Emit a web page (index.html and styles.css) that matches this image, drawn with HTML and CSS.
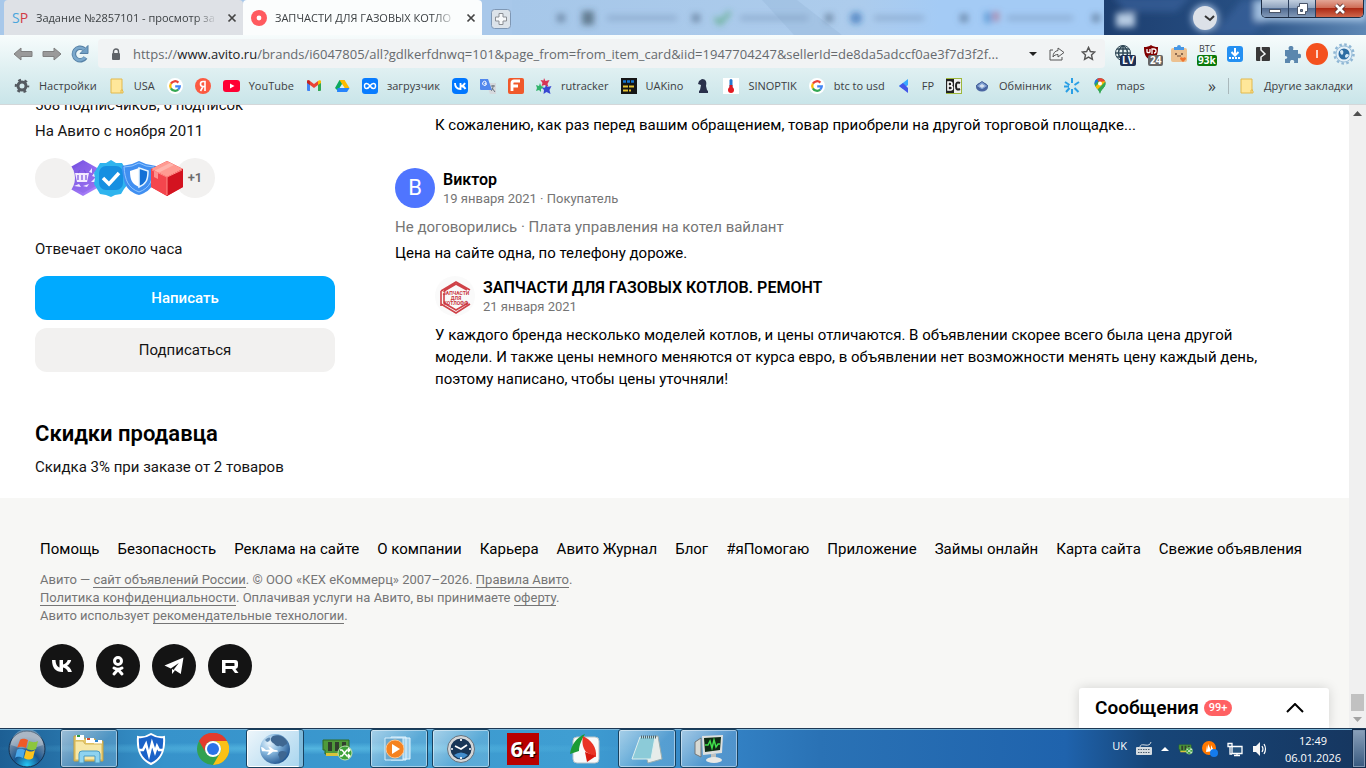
FILE: index.html
```html
<!DOCTYPE html>
<html lang="ru">
<head>
    <meta charset="UTF-8">
    <meta name="viewport" content="width=device-width, initial-scale=1.0">
    <title>ЗАПЧАСТИ ДЛЯ ГАЗОВЫХ КОТЛОВ</title>
    <link rel="stylesheet" href="styles.css">
</head>
<body>

<!-- shared icons -->
<svg class="defs" aria-hidden="true">
    <symbol id="google" viewBox="0 0 16 16"><circle cx="8" cy="8" r="8" fill="#fff"/><g fill="none" stroke-width="2.3"><path d="M11.4 4.6A4.8 4.8 0 0 0 3.9 5.6" stroke="#ea4335"/><path d="M3.9 5.6a4.8 4.8 0 0 0 0 4.8" stroke="#fbbc05"/><path d="M3.9 10.4a4.8 4.8 0 0 0 7.3 1.2" stroke="#34a853"/><path d="M11.2 11.6A4.8 4.8 0 0 0 12.8 8.3H8.2" stroke="#4285f4"/></g></symbol>
    <symbol id="folder" viewBox="0 0 16 16"><path d="M2 1h11v11l1 1v2H2z" fill="#ffe79a" stroke="#e2b94c"/><path d="M12 15v-3h2" fill="none" stroke="#e2b94c"/></symbol>
    <symbol id="close" viewBox="0 0 10 10"><path d="M1.5 1.5l7 7M8.5 1.5l-7 7" stroke="#444" stroke-width="1.7"/></symbol>
    <symbol id="ram" viewBox="0 0 32 24"><path d="M2 3h26v14H4v-4H2z" fill="#4f9a3a" stroke="#2e6a25"/><path d="M7 5h4v9H7zM14 5h4v9h-4zM21 5h4v9h-4z" fill="#31402e"/><path d="M5 16h17v3H5z" fill="#d9c33a"/><circle cx="24" cy="16" r="7" fill="#3fa23a" stroke="#bfe3b4"/><path d="M19 13h2l5 6h3M19 19h2l5-6h3M27 11l2 2-2 2M27 17l2 2-2 2" fill="none" stroke="#fff" stroke-width="1.4"/></symbol>
</svg>

<div class="window">
    <header class="tabs">
        <div class="tab">
            <span class="sp"><i>S</i><b>P</b></span>
            <span class="tab-title">Задание №2857101 - просмотр за</span>
            <button class="tab-close" aria-label="Закрыть"><svg width="10" height="10"><use href="#close"/></svg></button>
        </div>
        <div class="tab active">
            <svg width="16" height="16" viewBox="0 0 16 16"><circle cx="8" cy="8" r="8" fill="#ff5a5f"/><circle cx="8" cy="8" r="2.4" fill="#fff"/></svg>
            <span class="tab-title">ЗАПЧАСТИ ДЛЯ ГАЗОВЫХ КОТЛО</span>
            <button class="tab-close" aria-label="Закрыть"><svg width="10" height="10"><use href="#close"/></svg></button>
        </div>
        <button class="new-tab" aria-label="Новая вкладка"><svg width="20" height="20" viewBox="0 0 20 20"><rect x=".5" y=".5" width="19" height="19" rx="3" fill="#dce3ea" stroke="#7e97b4"/><path d="M8 4.500h4V8h3.500v4H12v3.500H8V12H4.500V8H8z" fill="#f6f8fa" stroke="#8b8f95"/></svg></button>
        <!-- windows seen through the glass -->
        <svg class="glass" viewBox="0 0 854 35" preserveAspectRatio="none" aria-hidden="true">
            <defs>
                <filter id="soft" x="-20%" y="-20%" width="140%" height="140%"><feGaussianBlur stdDeviation="3"/></filter>
                <linearGradient id="sky" x2="1" y2="0"><stop offset="0" stop-color="#a6c7e9"/><stop offset=".4" stop-color="#adccec"/><stop offset=".5" stop-color="#a4cbf5"/></linearGradient>
                <linearGradient id="deep" x2="1" y2="0"><stop offset="0" stop-color="#1d3f70"/><stop offset=".55" stop-color="#274f83"/><stop offset="1" stop-color="#5f88b5"/></linearGradient>
            </defs>
            <rect width="854" height="35" fill="url(#sky)"/>
            <path d="M250 0h35l45 35h-48z" fill="#96b6da" opacity=".4"/>
            <rect x="592" width="262" height="35" fill="url(#deep)"/>
            <g filter="url(#soft)">
                <path d="M600-4h80l-16 16h-50zM700 35l30-35h50l-40 35z" fill="#3a66a0" opacity=".6"/>
                <g opacity=".6">
                    <path d="M95 18h70M228 18h68M362 18h50M495 18h66" stroke="#7f9cc0" stroke-width="5"/>
                    <path d="M45 14h8v8h-8zM180 14h8v8h-8zM313 14h8v8h-8zM448 14h8v8h-8zM580 14h8v8h-8z" fill="#4c6480"/>
                    <rect x="70" y="11" width="12" height="14" fill="#334a58"/>
                    <path d="M203 18l5 5 10-11" stroke="#3ca05d" stroke-width="4" fill="none"/>
                    <circle cx="344" cy="18" r="6" fill="#215fae"/>
                    <rect x="472" y="12" width="8" height="11" fill="#4288c9"/><rect x="481" y="12" width="6" height="9" fill="#b45c74"/>
                </g>
                <rect x="604" y="13" width="19" height="14" fill="#b5cae2"/>
                <circle cx="693" cy="18" r="14" fill="#8fabcf"/>
                <rect x="742" y="0" width="112" height="21" fill="#b9d5f0" opacity=".8"/>
            </g>
        </svg>
        <button class="tab-search" aria-label="Поиск вкладок"><svg width="24" height="24" viewBox="0 0 24 24"><circle cx="12" cy="12" r="12" fill="#dce1e8"/><path d="M12 10l5 4 4-4" fill="none" stroke="#333" stroke-width="2"/></svg></button>
        <div class="caption-buttons">
            <button class="cap" aria-label="Свернуть"><svg width="14" height="12" viewBox="0 0 14 12"><rect x="1.500" y="6.500" width="11" height="3" fill="#fff" stroke="#4a5569"/></svg></button>
            <button class="cap" aria-label="Восстановить"><svg width="14" height="12" viewBox="0 0 14 12"><path d="M4.500.500h8v8h-2v3h-8v-8h2z" fill="#fff" stroke="#4a5569"/><path d="M5.500 6.500h2v2h-2z" fill="#6d87a8" stroke="#4a5569"/></svg></button>
            <button class="cap cap-close" aria-label="Закрыть окно"><svg width="14" height="12" viewBox="0 0 14 12"><path d="M3 2l8 8M11 2l-8 8" stroke="#5b3030" stroke-width="4.500"/><path d="M3 2l8 8M11 2l-8 8" stroke="#fff" stroke-width="2.600"/></svg></button>
        </div>
    </header>

    <div class="chrome">
        <div class="toolbar">
            <button class="tool" aria-label="Назад"><svg width="20" height="14" viewBox="0 0 20 14"><path d="M1 7l7-6v3.500h11v5H8V13z" fill="#9a9a9a" stroke="#808080"/></svg></button>
            <button class="tool" aria-label="Вперёд"><svg width="20" height="14" viewBox="0 0 20 14"><path d="M19 7l-7-6v3.500H1v5h11V13z" fill="#9a9a9a" stroke="#808080"/></svg></button>
            <button class="tool" aria-label="Обновить"><svg width="18" height="18" viewBox="0 0 18 18"><path d="M14.500 12.500A6.300 6.300 0 1 1 13 4" fill="none" stroke="#5580a5" stroke-width="4.500"/><path d="M17 .500v8H9z" fill="#6f9fc5" stroke="#5580a5"/><path d="M14 12.500A6.200 6.200 0 1 1 13 4.300" fill="none" stroke="#7aa8cc" stroke-width="2.600"/></svg></button>
            <div class="address">
                <svg width="10" height="12" viewBox="0 0 10 12"><rect x="1" y="5" width="8" height="7" rx="1" fill="#5f6368"/><path d="M2.500 5V3.500a2.500 2.500 0 0 1 5 0V5" fill="none" stroke="#5f6368" stroke-width="1.400"/></svg>
                <span class="url">https://<b>www.avito.ru</b>/brands/i6047805/all?gdlkerfdnwq=101&amp;page_from=from_item_card&amp;iid=1947704247&amp;sellerId=de8da5adccf0ae3f7d3f2f...</span>
                <svg width="8" height="4" viewBox="0 0 8 4"><path d="M0 0h8L4 4z" fill="#222"/></svg>
                <svg width="16" height="14" viewBox="0 0 16 14"><path d="M4 3H1v10h12v-3" fill="none" stroke="#555"/><path d="M9 1l6 4.500L9 10V7.500C6.500 7.500 5 8.500 4 10c0-4 2-6 5-6.500z" fill="none" stroke="#555" stroke-linejoin="round"/></svg>
                <svg class="star" width="15" height="15" viewBox="0 0 16 16"><path d="M8 1.500l2 4.400 4.700.5-3.500 3.200 1 4.700L8 11.900l-4.200 2.400 1-4.700L1.300 6.400 6 5.900z" fill="none" stroke="#555" stroke-width="1.500"/></svg>
            </div>
            <div class="extensions">
                <div class="ext">
                    <svg width="16" height="16" viewBox="0 0 16 16"><circle cx="8" cy="8" r="7.500" fill="#eaf5f4" stroke="#304958"/><path d="M.500 8h15M8 .500v15M2 4h12M2 12h12M8 .500C2 5 2 11 8 15.500M8 .500c6 4.500 6 10.500 0 15" fill="none" stroke="#304958" stroke-width="1.500"/></svg>
                    <span class="badge navy">LV</span>
                </div>
                <div class="ext">
                    <svg width="16" height="16" viewBox="0 0 16 16"><path d="M8 0c2 1.500 4 2 7 2 0 7-1 10-7 14C2 12 1 9 1 2c3 0 5-.5 7-2z" fill="#800000"/><path d="M4 4v3a2 2 0 0 0 3 0V4M9 9V4h2a2 2 0 0 1 0 4" fill="none" stroke="#fff" stroke-width="1.300"/></svg>
                    <span class="badge grey">24</span>
                </div>
                <svg width="16" height="18" viewBox="0 0 16 18"><rect y="3" width="16" height="14" rx="2" fill="#ecc191"/><path d="M3 2h3a2 2 0 0 1 4 0h3v3H3z" fill="#4697e4"/><circle cx="5" cy="9" r="1" fill="#6b4a38"/><circle cx="11" cy="9" r="1" fill="#6b4a38"/><path d="M6 11h4" stroke="#6b4a38"/><path d="M12 17l-3-3c0-2 2-2 3-1 1-1 3-1 3 1z" fill="#ef7631"/></svg>
                <div class="ext btc">BTC<span class="badge green">93k</span></div>
                <svg width="16" height="16" viewBox="0 0 16 16"><rect width="16" height="16" rx="3" fill="#2490f2"/><path d="M8 2v6M4.500 6L8 9.500 11.500 6" fill="none" stroke="#fff" stroke-width="2"/><path d="M2 12h12" stroke="#fff" stroke-width="2" stroke-dasharray="2 1"/></svg>
                <svg width="16" height="16" viewBox="0 0 16 16"><rect x="1" y="1" width="14" height="14" rx="1" fill="#383838"/><path d="M6 0v4l4 4-4 3v5" fill="none" stroke="#f4f7f7" stroke-width="1.500"/></svg>
                <div class="profile">
                    <svg width="18" height="18" viewBox="0 0 18 18"><path d="M2 5h4c-1-3 0-4 2-4s3 1 2 4h5v4c3-1 3 1 3 2s0 3-3 2v5h-4c1-3-1-3-2-3s-2 0-2 3H2v-4c3 0 3-3 0-3z" fill="#5b87ae"/></svg>
                    <svg width="22" height="22" viewBox="0 0 22 22"><circle cx="11" cy="11" r="11" fill="#f4511e"/><path d="M11 7v8" stroke="#fff" stroke-width="1.500"/></svg>
                    <svg width="22" height="22" viewBox="0 0 22 22"><circle cx="11" cy="11" r="9.500" fill="#dcecf6" stroke="#8eb6d4" stroke-width="2.500" stroke-dasharray="2.500 2.470"/><circle cx="11" cy="11" r="8" fill="#e5f1f8" stroke="#9abfd9"/><circle cx="11" cy="11" r="5.500" fill="#2d6da3"/><path d="M7 8c3-3 4 1 3 3s-3 0-3-3M12 13c1-3 3-2 4-1-1 3-4 4-4 1" fill="#d6e9f5"/></svg>
                </div>
            </div>
        </div>

        <nav class="bookmarks">
            <a href="#"><svg width="16" height="16" viewBox="0 0 16 16"><circle cx="8" cy="8" r="4" fill="none" stroke="#555b61" stroke-width="3"/><circle cx="8" cy="8" r="6" fill="none" stroke="#555b61" stroke-width="2.500" stroke-dasharray="2.700 3.580" stroke-dashoffset="1.300"/></svg>Настройки</a>
            <a href="#"><svg width="16" height="16"><use href="#folder"/></svg>USA</a>
            <a href="#" aria-label="Google"><svg width="16" height="16"><use href="#google"/></svg></a>
            <a href="#" aria-label="Яндекс"><svg width="16" height="16" viewBox="0 0 16 16"><circle cx="8" cy="8" r="8" fill="#fc5a41"/><path d="M10 13V3.500H8a2.400 2.400 0 0 0 0 5h2M8 8.500L5.500 13" fill="none" stroke="#fff" stroke-width="1.600"/></svg></a>
            <a href="#"><svg width="17" height="16" viewBox="0 0 17 16"><rect y="2" width="17" height="12" rx="3" fill="#ff0033"/><path d="M7 5.500v5l4.500-2.500z" fill="#fff"/></svg>YouTube</a>
            <a href="#" aria-label="Gmail"><svg width="16" height="16" viewBox="0 0 16 16"><path d="M1 3.500h3V13H2a1 1 0 0 1-1-1z" fill="#4285f4"/><path d="M12 3.500h3V12a1 1 0 0 1-1 1h-2z" fill="#34a853"/><path d="M1 3.500C1 2 3 2 4 3l4 3 4-3v4L8 10 4 7z" fill="#ea4335"/><path d="M1 3.500c0-1.500 2-1.500 3-.5v4L1 5z" fill="#c5221f"/><path d="M12 3c1-1 3-1 3 .5V5l-3 2z" fill="#fbbc04"/></svg></a>
            <a href="#" aria-label="Диск"><svg width="16" height="16" viewBox="0 0 16 16"><path d="M5.500 2h5L5 14 1 10z" fill="#0da960"/><path d="M5.500 2h5l5 8h-5z" fill="#ffba00"/><path d="M3.500 10h12L13 14H3z" fill="#2684fc"/><path d="M8 6l2.500 4h-5z" fill="#e3f1f3"/></svg></a>
            <a href="#"><svg width="16" height="16" viewBox="0 0 16 16"><rect width="16" height="16" rx="3" fill="#087cff"/><path d="M8 8C6 5 2.500 4.500 2.500 8S6 11 8 8s5.500-3.500 5.500 0S10 11 8 8z" fill="none" stroke="#fff" stroke-width="1.500"/></svg>загрузчик</a>
            <a href="#" aria-label="ВКонтакте"><svg width="16" height="16" viewBox="0 0 16 16"><rect width="16" height="16" rx="4" fill="#07f"/><path d="M3 5c0 4 2 6 5.500 6V5M13 5c-1 2-2 3-4 3 2 0 3.500 1 4.500 3" fill="none" stroke="#fff" stroke-width="1.800"/></svg></a>
            <a href="#" aria-label="Переводчик"><svg width="16" height="16" viewBox="0 0 16 16"><path d="M6 5h10v11h-6z" fill="#d5d9dd"/><path d="M0 1h8l4 11H1a1 1 0 0 1-1-1z" fill="#5187ed"/><path d="M7 5H5v1h1.500a2 2 0 1 1-.5-2" fill="none" stroke="#fff"/><path d="M11 8h4M13 7v1c0 3-1 4-2 5M12 10l3 4" fill="none" stroke="#69737d"/></svg></a>
            <a href="#" aria-label="F"><svg width="16" height="16" viewBox="0 0 16 16"><rect width="16" height="16" rx="2" fill="#f0592b"/><path d="M4 13V5q0-2 2-2h6M4 8h6" fill="none" stroke="#fff" stroke-width="2.800"/></svg></a>
            <a href="#"><svg width="16" height="16" viewBox="0 0 16 16"><path d="M8 0l1.500 3 4-1-2 4 1 3-4-2-3 1 1-3-2-3 3 .5z" fill="#d93454"/><path d="M4 5l1 3 3 1-3 2v3l-2-2-3 1 1-3-1-3 3 1z" fill="#31b46b"/><path d="M10 7l1.500 2 4-1-2 4 1 4-4-2-3 2 .5-4-2-2 3-.5z" fill="#3848d2"/></svg>rutracker</a>
            <a href="#"><svg width="16" height="16" viewBox="0 0 16 16"><rect width="16" height="16" fill="#151515"/><path d="M2 3.500h12" stroke="#1675d1" stroke-width="2.500" stroke-dasharray="3 1"/><path d="M2 8.500h12M2 12.500h8" stroke="#e4c233" stroke-width="2" stroke-dasharray="5 1"/></svg>UAKino</a>
            <a href="#" aria-label="Шахматы"><svg width="16" height="16" viewBox="0 0 16 16"><path d="M7 1c4 0 5 3 4 7l1 4 1 1v2H4v-2l1-1 1-5-3-1 1-3z" fill="#29304a"/></svg></a>
            <a href="#"><svg width="16" height="16" viewBox="0 0 16 16"><rect width="16" height="16" fill="#fff"/><rect x="6.500" y="1" width="3" height="11" rx="1.500" fill="#2678ce"/><path d="M8 7v5" stroke="#d81720" stroke-width="3"/><circle cx="8" cy="12" r="3" fill="#e31b23"/></svg>SINOPTIK</a>
            <a href="#"><svg width="16" height="16"><use href="#google"/></svg>btc to usd</a>
            <a href="#"><svg width="16" height="16" viewBox="0 0 16 16"><path d="M11 1v6L6 11 2 8z" fill="#38a9ff"/><path d="M2 8l4-3 5 5v5z" fill="#4256e8"/></svg>FP</a>
            <a href="#" aria-label="BC"><svg width="16" height="16" viewBox="0 0 16 16"><rect width="16" height="16" fill="#9db83b"/><rect y="1" width="8" height="14" fill="#222"/><rect x="8" y="1" width="7" height="14" fill="#eee"/><path d="M2 4v8h2.500a2 2 0 0 0 0-4H2h2a2 2 0 0 0 0-4z" fill="none" stroke="#fff" stroke-width="1.600"/><path d="M14 5q-4-2-4 3t4 3" fill="none" stroke="#222" stroke-width="2"/></svg></a>
            <a href="#"><svg width="16" height="16" viewBox="0 0 16 16"><ellipse cx="8" cy="9" rx="6" ry="4.500" fill="#4a66a3"/><path d="M2 8l6-4.500L14 8l-6 4z" fill="#7e9ed1" stroke="#445f98"/><path d="M5 8l3-2 3 2-3 2z" fill="#d5e1f0"/></svg>Обмінник</a>
            <a href="#" aria-label="Заметки"><svg width="16" height="16" viewBox="0 0 16 16"><path d="M8 5V0M10.500 7L15 4M10.500 10l4 4M8 11v5M5.500 10L2 14M5.500 7L1 4M5 8.500H0" stroke="#2a9fe5" stroke-width="2"/></svg></a>
            <a href="#"><svg width="16" height="16" viewBox="0 0 16 16"><defs><clipPath id="pin"><path d="M8 0a5.500 5.500 0 0 1 5.500 5.500C13.500 9.500 9 11 8 16 7 11 2.500 9.500 2.500 5.500A5.500 5.500 0 0 1 8 0z"/></clipPath></defs><g clip-path="url(#pin)"><rect width="16" height="16" fill="#34a853"/><path d="M0 9L9 0H0z" fill="#1a73e8"/><path d="M4 0h12v5H8z" fill="#ea4335"/><path d="M2 10l6-6 6-1-7 9z" fill="#fbbc04"/><path d="M9 8l5-5v5l-6 8-3-4z" fill="#34a853"/></g><circle cx="8" cy="5.500" r="2" fill="#fff"/></svg>maps</a>
            <span class="overflow">»</span>
            <a href="#" class="other"><svg width="16" height="16"><use href="#folder"/></svg>Другие закладки</a>
        </nav>
    </div>

    <div class="viewport">
        <div class="page">
            <main class="content">
                <aside class="seller">
                    <p>508 подписчиков, 6 подписок</p>
                    <p>На Авито с ноября 2011</p>
                    <div class="medals">
                        <span class="medal plain first"></span>
                        <svg class="medal" viewBox="0 0 40 40"><defs><linearGradient id="violet" x2="1" y2="1"><stop stop-color="#6b46dc"/><stop offset="1" stop-color="#b58cff"/></linearGradient></defs><path d="M20 2l16 9v18l-16 9-16-9V11z" fill="url(#violet)"/><path d="M20 5l13 8v15l-13 7-13-7V13z" fill="#8660e6" opacity=".5"/><path d="M12 15h14l-2 9H14z" fill="#f2eaff"/><path d="M15 15l2-3M23 15l-2-3M15 17v5M19 17v5M23 17v5" stroke="#7952dc" stroke-width="1.200"/><path d="M11 28l5-2 2 3zM20 28l6-2-2 3zM28 24l4-4v4zM29 18l3-4v5zM26 14l3-4v5z" fill="#f2eaff"/></svg>
                        <svg class="medal" viewBox="0 0 40 40"><path d="M20 2l5 3 6 0 3 5 3 5-1 5 1 6-4 5-3 5-6 1-4 2-5-2-6-1-3-5-3-5 1-6-1-5 3-5 3-5 6 0z" fill="#2fb4ee"/><rect x="8" y="8" width="24" height="24" rx="7" fill="#168fe1"/><path d="M12 20l6 6 10-11" fill="none" stroke="#fff" stroke-width="3.500"/></svg>
                        <svg class="medal" viewBox="0 0 40 40"><path d="M20 3l7 3 10 2c0 15-3 25-17 29C6 33 4 23 3 8l10-2z" fill="#408ff1"/><path d="M20 5l7 3 8 1c-1 13-4 21-15 25C9 30 6 22 5 9l8-1z" fill="none" stroke="#90c5ff"/><path d="M11 13l9-3v19c-7-3-9-7-9-16z" fill="#fff"/><path d="M20 10l9 3c0 9-2 13-9 16z" fill="#1370d6" stroke="#e7f5ff" stroke-width="1.500"/></svg>
                        <svg class="medal" viewBox="0 0 40 40"><path d="M20 3l16 8v18l-16 9-16-9V11z" fill="#ed2932"/><path d="M4 11l16-8 16 8-16 8z" fill="#ff9a91"/><path d="M20 19l16-8v18l-16 9z" fill="#d31320"/><path d="M4 11l16 8v19L4 29z" fill="#f4464d"/><path d="M27 7L11 15v6l-4-2v-6l16-8z" fill="#ffc7be" opacity=".6"/><path d="M5 12l15 7 15-7M20 19v18" fill="none" stroke="#ff8983"/></svg>
                        <span class="medal plain more">+1</span>
                    </div>
                    <p class="answers">Отвечает около часа</p>
                    <button class="btn btn-primary">Написать</button>
                    <button class="btn">Подписаться</button>
                    <h2>Скидки продавца</h2>
                    <p class="discount">Скидка 3% при заказе от 2 товаров</p>
                </aside>

                <section class="reviews">
                    <p class="reply-text">К сожалению, как раз перед вашим обращением, товар приобрели на другой торговой площадке...</p>
                    <article class="review">
                        <div class="author">
                            <span class="avatar">В</span>
                            <div>
                                <h3>Виктор</h3>
                                <small>19 января 2021 · Покупатель</small>
                            </div>
                        </div>
                        <p class="deal">Не договорились · Плата управления на котел вайлант</p>
                        <p>Цена на сайте одна, по телефону дороже.</p>
                        <div class="reply">
                            <div class="author">
                                <svg class="shop-logo" width="40" height="40" viewBox="0 0 40 40"><circle cx="20" cy="20" r="20" fill="#fafafa"/><path d="M6 15l15-9 14 8M9 15l12-7 11 6M6 15v13l15 9 14-9M9 17v10l12 7 12-7M6 25v5" fill="none" stroke="#cf4248" stroke-width="1.600"/><text x="21" y="19" text-anchor="middle" class="logo-text">ЗАПЧАСТИ</text><text x="21" y="24" text-anchor="middle" class="logo-text">ДЛЯ</text><text x="21" y="29" text-anchor="middle" class="logo-text">КОТЛОФФ</text></svg>
                                <div>
                                    <h3>ЗАПЧАСТИ ДЛЯ ГАЗОВЫХ КОТЛОВ. РЕМОНТ</h3>
                                    <small>21 января 2021</small>
                                </div>
                            </div>
                            <p>У каждого бренда несколько моделей котлов, и цены отличаются. В объявлении скорее всего была цена другой модели. И также цены немного меняются от курса евро, в объявлении нет возможности менять цену каждый день, поэтому написано, чтобы цены уточняли!</p>
                        </div>
                    </article>
                </section>
            </main>

            <footer class="footer">
                <nav class="footer-links">
                    <a href="#">Помощь</a>
                    <a href="#">Безопасность</a>
                    <a href="#">Реклама на сайте</a>
                    <a href="#">О компании</a>
                    <a href="#">Карьера</a>
                    <a href="#">Авито Журнал</a>
                    <a href="#">Блог</a>
                    <a href="#">#яПомогаю</a>
                    <a href="#">Приложение</a>
                    <a href="#">Займы онлайн</a>
                    <a href="#">Карта сайта</a>
                    <a href="#">Свежие объявления</a>
                </nav>
                <p class="legal">
                    Авито — <a href="#">сайт объявлений России</a>. © ООО «КЕХ еКоммерц» 2007–2026. <a href="#">Правила Авито</a>.<br>
                    <a href="#">Политика конфиденциальности</a>. Оплачивая услуги на Авито, вы принимаете <a href="#">оферту</a>.<br>
                    Авито использует <a href="#">рекомендательные технологии</a>.
                </p>
                <div class="socials">
                    <a href="#" aria-label="ВКонтакте"><svg width="44" height="44" viewBox="0 0 44 44"><path d="M12 16h3.500c.2 5 2.400 7 4 7.500V16H23v4.500c2-.3 4-2.200 4.700-4.500h3.500c-.6 2.700-2.600 4.900-4.200 5.800 1.600.8 3.900 2.600 4.900 6.200H28c-.8-2.400-2.700-4.200-5-4.500V28h-.6C15.500 28 12.100 23.800 12 16z" fill="#fff"/></svg></a>
                    <a href="#" aria-label="Одноклассники"><svg width="44" height="44" viewBox="0 0 44 44"><circle cx="22" cy="17" r="3.500" fill="none" stroke="#fff" stroke-width="3"/><path d="M18 24c3 1.800 5 1.800 8 0M22 25.500l-4 4.500M22 25.500l4 4.500" fill="none" stroke="#fff" stroke-width="3" stroke-linecap="round"/></svg></a>
                    <a href="#" aria-label="Telegram"><svg width="44" height="44" viewBox="0 0 44 44"><path d="M12.500 21.500L31.500 13.500l-2.700 16.500-7-4.500 5-6.500-8 5.500z" fill="#fff"/><path d="M20 25v5l3-3.500z" fill="#fff"/></svg></a>
                    <a href="#" aria-label="Rutube"><svg width="44" height="44" viewBox="0 0 44 44"><path d="M14 16h13q3 0 3 3v3q0 2.500-2.500 3l3 4H27l-3-4h-6.500v4H14zM17.500 19v3H26q.5 0 .5-.5v-2q0-.5-.5-.5z" fill="#fff" fill-rule="evenodd"/></svg></a>
                </div>
            </footer>
            <button class="messenger">
                <span>Сообщения</span><span class="count">99+</span>
                <svg width="18" height="10" viewBox="0 0 18 10"><path d="M1 9l8-8 8 8" fill="none" stroke="#000" stroke-width="2"/></svg>
            </button>
        </div>
        <div class="scrollbar" aria-hidden="true">
            <svg width="9" height="5" viewBox="0 0 9 5"><path d="M0 5h9L4.500 0z" fill="#505050"/></svg>
            <span class="thumb"></span>
            <svg width="9" height="5" viewBox="0 0 9 5"><path d="M0 0h9L4.500 5z" fill="#a3a3a3"/></svg>
        </div>
    </div>

    <footer class="taskbar">
        <button class="start" aria-label="Пуск"><svg width="38" height="38" viewBox="0 0 38 38"><defs><radialGradient id="orb" cx=".5" cy=".95" r=".8"><stop stop-color="#24c8f5"/><stop offset=".45" stop-color="#17548f"/><stop offset="1" stop-color="#8799ac"/></radialGradient></defs><circle cx="19" cy="19" r="18" fill="url(#orb)" stroke="#15314f"/><path d="M3 15a16 16 0 0 1 32 0q-16 7-32 0" fill="#fff" opacity=".3"/><path d="M12 10c3-2 5-1 8 0l-2 8c-3-1-5-2-9 0z" fill="#ef5a27"/><path d="M21 11c3 1 5 2 9 0l-2 8c-4 2-6 1-9 0z" fill="#8cc63e"/><path d="M9 20c3-2 5-1 8 0l-2 8c-3-1-5-2-8 0z" fill="#4aa8ea"/><path d="M18 20c4 2 6 2 9 0l-2 8c-3 2-5 2-9 0z" fill="#fcc21b"/></svg></button>
        <div class="apps">
            <button class="app open" aria-label="Проводник"><svg width="34" height="32" viewBox="0 0 34 32"><path d="M2 3h9l2 3h10l2 2h6v20H2z" fill="#e5c96c" stroke="#c29f40"/><path d="M4 2h8v5H4zM14 5h8v5h-8zM22 7h8v5h-8z" fill="#fff"/><path d="M5 3h3" stroke="#2c9b45" stroke-width="2"/><path d="M15 6h3" stroke="#d44a32" stroke-width="2"/><path d="M23 8h3" stroke="#2f86cf" stroke-width="2"/><path d="M3 8h8l2 3h17v16H3z" fill="#f7e8a8" stroke="#d6b657"/><path d="M7 30v-9q0-3 3-3h15q3 0 3 3v9h-5v-7H12v7z" fill="#8ed3f0" stroke="#4b9ac2"/></svg></button>
            <button class="app" aria-label="Защита"><svg width="30" height="32" viewBox="0 0 30 32"><path d="M15 1q6 4 13 3c1 13-2 22-13 27C4 26 1 17 2 4q7 1 13-3z" fill="#1a62c8" stroke="#fff" stroke-width="2"/><path d="M3 17h4l3-6 3 11 3-12 3 9 2-6 2 4h4" fill="none" stroke="#fff" stroke-width="2.500"/></svg></button>
            <button class="app" aria-label="Chrome"><svg width="32" height="32" viewBox="0 0 32 32"><circle cx="16" cy="16" r="16" fill="#31a151"/><path d="M2 8a16 16 0 0 1 28 0H16a8 8 0 0 0-7 12z" fill="#e33b2e"/><path d="M30 8a16 16 0 0 1-14 24l7-12a8 8 0 0 0-7-12z" fill="#fbc116"/><circle cx="16" cy="16" r="8" fill="#fff"/><circle cx="16" cy="16" r="6" fill="#2b73e8"/></svg></button>
            <button class="app current" aria-label="Браузер"><svg width="32" height="32" viewBox="0 0 32 32"><defs><radialGradient id="earth" cx=".3" cy=".3" r=".8"><stop stop-color="#e9f4fb"/><stop offset=".4" stop-color="#8dbde2"/><stop offset="1" stop-color="#1a4f8c"/></radialGradient></defs><circle cx="16" cy="16" r="15" fill="url(#earth)"/><path d="M14 3c6-2 12 1 14 6 1 3-2 2-3 4-2 2-3-1-5 0-3 1-4-2-6-3-3-2-3-5 0-7zM20 19c3-2 7-1 8 1-1 4-3 6-6 8-2-1-1-4-3-6z" fill="#3f6791"/><path d="M6 7c2-2 4-3 5-2s-1 4-3 4z" fill="#5d89b2"/><path d="M2 14l2 .5 3 2.500 4-.5-2-3 2 .3 4 3 3 .5q2 1 0 1.500l-4 0-4 3h-2l2-3-4-.5-3 0z" fill="#fff"/></svg></button>
            <button class="app" aria-label="Память"><svg width="32" height="24"><use href="#ram"/></svg></button>
            <button class="app open" aria-label="Проигрыватель"><svg width="30" height="28" viewBox="0 0 30 28"><path d="M7 2h15v23H7zM13 3h13v21H13z" fill="#9fd0ec" stroke="#e0f3fd"/><path d="M1 3h18v22H1z" fill="#6ba9cf" stroke="#d7effd"/><circle cx="11" cy="14" r="9" fill="#f58220" stroke="#fbc590"/><path d="M8 9v10l8-5z" fill="#fff"/></svg></button>
            <button class="app open" aria-label="Часы"><svg width="30" height="30" viewBox="0 0 30 30"><circle cx="15" cy="15" r="12" fill="#193657" stroke="#d3d6d8" stroke-width="3"/><circle cx="15" cy="15" r="13.500" fill="none" stroke="#65717c"/><path d="M8 21q7-5 14 0-7 7-14 0" fill="#438dcc"/><path d="M9 12l6 3 6-4M15 5v2M15 23v2M5 15h2M23 15h2" fill="none" stroke="#fff" stroke-width="1.700"/></svg></button>
            <button class="app" aria-label="AIDA64"><span class="aida">64</span></button>
            <button class="app" aria-label="FastStone"><svg width="32" height="32" viewBox="0 0 32 32"><rect x="4" y="4" width="26" height="26" rx="4" fill="#f9faf9" stroke="#b7c5ca"/><path d="M16 1C8 4 2 12 1 21l9-3C10 12 13 6 16 1z" fill="#1b9b36"/><path d="M14 3c-1 5-1 11 3 16l10 5C28 14 22 7 14 3z" fill="#e93425"/><path d="M16 19l11 4-9 6z" fill="#d8170d"/></svg></button>
            <button class="app open" aria-label="Блокнот"><svg width="32" height="30" viewBox="0 0 32 30"><path d="M10 4l17-2 4 23-14 4z" fill="#e7ecea" stroke="#9caeae"/><path d="M9 3h15l-4 22H1z" fill="#8ccbd8" stroke="#deefef"/><path d="M10 3h15" stroke="#50666d" stroke-width="3" stroke-dasharray="1 1"/></svg></button>
            <button class="app open" aria-label="Монитор"><svg width="32" height="30" viewBox="0 0 32 30"><path d="M2 8l6-4v19l-6-3z" fill="#d8d9d4" stroke="#72777a"/><path d="M9 2l21-1-1 18-19 2z" fill="#dde0df"/><path d="M11 4l17-1-1 13-15 2z" fill="#102b15"/><path d="M12 11h3l2-4 2 7 2-8 2 7 2-3h2" fill="none" stroke="#40df4b" stroke-width="1.500"/><path d="M18 20h5v4h-5z" fill="#bfc1bf"/><ellipse cx="21" cy="26" rx="8" ry="3" fill="#e8e8e5"/></svg></button>
        </div>
        <div class="tray">
            <span class="lang">UK</span>
            <svg width="16" height="14" viewBox="0 0 16 14"><rect y="5" width="16" height="8" rx="1" fill="#d5dce1"/><path d="M2 7.500h12M2 10.500h12" stroke="#4b5d6e" stroke-dasharray="1.500 1"/><path d="M4 5q0-3 5-2t6-3" fill="none" stroke="#d5dce1"/></svg>
            <svg width="8" height="4" viewBox="0 0 8 4"><path d="M0 4h8L4 0z" fill="#fff"/></svg>
            <svg width="15" height="12"><use href="#ram"/></svg>
            <svg width="16" height="16" viewBox="0 0 16 16"><circle cx="7" cy="7" r="7" fill="#ff7800"/><path d="M4 11l1-7 1 5V3l3 6V4l3 6z" fill="#fff"/><circle cx="12" cy="12" r="4" fill="#147bed"/></svg>
            <svg width="16" height="16" viewBox="0 0 16 16"><path d="M5 5.500h10v7H5zM7 14.500h6M10 12v3" fill="#27547f" stroke="#fff" stroke-width="1.300"/><path d="M1 2.500h4v3H1zM3 5v8h2" fill="none" stroke="#fff" stroke-width="1.300"/></svg>
            <svg width="16" height="16" viewBox="0 0 16 16"><path d="M1 5h3l4-4v14l-4-4H1z" fill="#f6f6f6"/><path d="M10 5q2 3 0 6M12 3q3 5 0 10" fill="none" stroke="#fff" stroke-width="1.200"/></svg>
            <div class="clock">12:49<br>06.01.2026</div>
            <button class="show-desktop" aria-label="Свернуть все окна"></button>
        </div>
    </footer>
</div>

</body>
</html>
```
FILE: styles.css
```css
* {
    box-sizing: border-box;
}
body {
    margin: 0;
    font-family: Roboto, "Liberation Sans", sans-serif;
    font-size: 15px;
    line-height: 22px;
    color: #000;
}
h2, h3, p {
    margin: 0;
}
a {
    color: inherit;
    text-decoration: none;
}
button {
    padding: 0;
    border: none;
    background: none;
    font: inherit;
    color: inherit;
    cursor: pointer;
}
svg {
    display: block;
    flex: none;
}
.defs {
    position: absolute;
    width: 0;
    height: 0;
}
.window {
    display: flex;
    flex-direction: column;
    height: 100vh;
    overflow: hidden;
}

/* browser tabs */
.tabs {
    position: relative;
    display: flex;
    align-items: center;
    flex: none;
    height: 35px;
    padding-left: 4px;
    background: #a8c8ea;
    font-family: "Open Sans", "Noto Sans", sans-serif;
    font-size: 11px;
}
.tab {
    display: flex;
    align-items: center;
    gap: 8px;
    width: 239px;
    height: 35px;
    padding: 0 4px 0 8px;
    border-radius: 4px 4px 0 0;
    background: #dee1e6;
    color: #3c4043;
}
.tab.active {
    background: #fbfdfd;
}
.tab-title {
    flex: 1;
    white-space: nowrap;
    -webkit-mask-image: linear-gradient(to right, #000 88%, transparent);
    mask-image: linear-gradient(to right, #000 88%, transparent);
}
.tab-close {
    padding: 2px;
}
.sp {
    width: 16px;
    font-size: 14px;
}
.sp i {
    font-style: normal;
    color: #4aa5dc;
}
.sp b {
    font-weight: 400;
    color: #d23c45;
}
.new-tab {
    margin: 2px 0 0 9px;
    z-index: 1;
}
.glass {
    position: absolute;
    left: 512px;
    top: 0;
    width: calc(100% - 512px);
    height: 35px;
}
.tab-search {
    position: absolute;
    top: 6px;
    right: 149px;
}
.caption-buttons {
    position: absolute;
    top: 0;
    right: 2px;
    display: flex;
    height: 18px;
    border: 1px solid #1c2c44;
    border-top: none;
    border-radius: 0 0 5px 5px;
    overflow: hidden;
}
.cap {
    display: flex;
    align-items: center;
    justify-content: center;
    width: 27px;
    border-right: 1px solid #2c3f5c;
    background: linear-gradient(#c2cfdf, #90a4bf 45%, #526c92 50%, #8299b8);
}
.cap-close {
    width: 47px;
    border-right: none;
    background: linear-gradient(#e3a595, #cf6d57 45%, #ad2a15 50%, #d0674c);
}

/* toolbar and bookmarks */
.chrome {
    flex: none;
    border-bottom: 1px solid #d3d7d9;
    background: linear-gradient(#f7fcfc, #e0f0f2 48%, #c9e5e9);
    font-family: "Open Sans", "Noto Sans", sans-serif;
    font-size: 11px;
    color: #3c4043;
}
.toolbar {
    display: flex;
    align-items: center;
    gap: 9px;
    height: 37px;
    padding: 0 11px 0 13px;
}
.address {
    display: flex;
    flex: 1;
    align-items: center;
    gap: 12px;
    min-width: 0;
    height: 29px;
    padding: 0 9px 0 13px;
    border-radius: 4px;
    background: #f1f3f4;
}
.url {
    flex: 1;
    min-width: 0;
    white-space: nowrap;
    font-size: 13px;
    color: #666a6e;
}
.url b {
    font-weight: 400;
    color: #202124;
}
.star {
    margin-left: 4px;
}
.extensions {
    display: flex;
    align-items: center;
    gap: 12px;
    margin-left: 1px;
}
.profile {
    display: flex;
    align-items: center;
    gap: 5px;
}
.ext {
    position: relative;
    width: 16px;
    height: 18px;
}
.btc {
    font-size: 9px;
    line-height: 8px;
}
.badge {
    position: absolute;
    top: 10px;
    left: 5px;
    padding: 0 2px;
    border-radius: 2px;
    font-size: 10px;
    font-weight: 700;
    line-height: 11px;
    color: #fff;
}
.navy {
    background: #1e3054;
}
.grey {
    background: #666;
}
.green {
    left: -2px;
    padding: 0 1px;
    background: #0a7a0a;
}
.bookmarks {
    display: flex;
    align-items: center;
    gap: 12px;
    height: 32px;
    padding: 0 13px 4px 14px;
    white-space: nowrap;
}
.bookmarks a {
    display: flex;
    align-items: center;
    gap: 9px;
}
.overflow {
    margin-left: auto;
    font-size: 16px;
}
.bookmarks .other {
    padding-left: 10px;
    border-left: 1px solid #a9b8bb;
    line-height: 16px;
}

/* page area */
.viewport {
    display: flex;
    flex: 1;
    min-height: 0;
}
.page {
    position: relative;
    display: flex;
    flex: 1;
    flex-direction: column;
    justify-content: flex-end;
    min-width: 0;
    overflow: hidden;
    background: #fff;
}
.content {
    display: grid;
    flex: none;
    grid-template-columns: 300px 1fr;
    gap: 60px;
    padding: 0 70px 20px 35px;
}
.seller {
    display: flex;
    flex-direction: column;
    gap: 4px;
    color: #141414;
}
.medals {
    display: flex;
    margin-top: 12px;
    isolation: isolate;
}
.medal {
    position: relative;
    width: 40px;
    height: 40px;
    margin-right: -12px;
}
.plain {
    border-radius: 50%;
    background: #f2f1f0;
}
.first {
    z-index: 1;
}
.more {
    z-index: -1;
    font-size: 13px;
    font-weight: 600;
    line-height: 40px;
    text-align: center;
    color: #6b6b6b;
}
.answers {
    margin: 36px 0 12px;
}
.btn {
    height: 44px;
    margin-bottom: 4px;
    border-radius: 12px;
    background: #f2f1f0;
}
.btn-primary {
    background: #00aaff;
    font-weight: 500;
    color: #fff;
}
.seller h2 {
    margin-top: 40px;
    font-size: 22px;
    font-weight: 600;
    line-height: 28px;
    color: #000;
}
.discount {
    margin-top: 4px;
}
.reviews {
    padding-top: 20px;
}
.reply-text {
    margin: 0 0 32px 40px;
}
.author {
    display: flex;
    gap: 8px;
    height: 40px;
    margin-bottom: 8px;
}
.avatar {
    width: 40px;
    height: 40px;
    border-radius: 50%;
    background: #4f75ff;
    font-size: 22px;
    line-height: 40px;
    text-align: center;
    color: #fff;
}
.author h3 {
    font-size: 16px;
    font-weight: 600;
    line-height: 24px;
}
.author small {
    display: block;
    font-size: 13px;
    line-height: 14px;
    color: #757575;
}
.deal {
    margin-bottom: 4px;
    color: #757575;
}
.reply {
    margin: 12px 0 0 40px;
}
.logo-text {
    font-size: 5px;
    font-weight: 700;
    fill: #c9363e;
}

.footer {
    flex: none;
    padding: 40px;
    background: #f7f7f5;
}
.footer-links {
    display: flex;
    gap: 18px;
    white-space: nowrap;
}
.legal {
    margin: 11px 0 19px;
    font-size: 13px;
    line-height: 18px;
    color: #757575;
}
.legal a {
    border-bottom: 1px solid #757575;
}
.socials {
    display: flex;
    gap: 12px;
}
.socials a {
    border-radius: 50%;
    background: #141414;
}
.messenger {
    position: absolute;
    right: 20px;
    bottom: 0;
    display: flex;
    align-items: center;
    gap: 5px;
    width: 250px;
    height: 40px;
    padding: 0 25px 0 16px;
    border-radius: 3px 3px 0 0;
    background: #fff;
    box-shadow: 0 0 12px rgba(0, 0, 0, 0.15);
    font-size: 19px;
    font-weight: 600;
}
.messenger svg {
    margin-left: auto;
}
.count {
    padding: 0 5px;
    border-radius: 8px;
    background: #ff6163;
    font-size: 11px;
    font-weight: 500;
    line-height: 16px;
    color: #fff;
}
.scrollbar {
    display: flex;
    flex: none;
    flex-direction: column;
    align-items: center;
    gap: 6px;
    width: 17px;
    padding: 6px 0;
    background: #f0f0f0;
}
.thumb {
    width: 13px;
    height: 17px;
    margin-top: auto;
    background: #c1c1c1;
}

/* taskbar */
.taskbar {
    display: flex;
    flex: none;
    height: 40px;
    border-top: 1px solid #1d3854;
    background:
        radial-gradient(ellipse at 310px 50%, rgba(100, 201, 235, 0.6), transparent 330px),
        linear-gradient(to right, #1d5f94, #3793cb 12%, #3f9ed2 42%, #3280c3 54%, #2a72b5 60%, #1f63ad 78%, #174679 84%, #16365f);
    box-shadow: inset 0 1px 0 #7ab5d8;
    font-family: "Open Sans", "Noto Sans", sans-serif;
    font-size: 11px;
    color: #fff;
}
.start {
    margin-left: 8px;
}
.apps {
    display: flex;
    gap: 4px;
    margin-left: 14px;
}
.app {
    display: flex;
    align-items: center;
    justify-content: center;
    width: 58px;
    height: 39px;
    border: 1px solid transparent;
    border-radius: 3px;
}
.open {
    border-color: #17415f;
    background: linear-gradient(135deg, rgba(255, 255, 255, 0.55), rgba(255, 255, 255, 0.15) 60%);
    box-shadow: inset 0 0 0 1px rgba(255, 255, 255, 0.45);
}
.current {
    border-color: #17415f;
    background: linear-gradient(135deg, #eef6fb, #a6d4ee);
    box-shadow: inset -5px 0 0 -1px #7eb9da, inset 0 0 0 1px #fff;
}
.aida {
    width: 32px;
    height: 32px;
    background: #b90000;
    font-size: 22px;
    font-weight: 700;
    line-height: 31px;
    text-shadow: 1px 1px 1px #000;
}
.tray {
    display: flex;
    align-items: center;
    gap: 9px;
    margin-left: auto;
}
.lang {
    margin-bottom: 6px;
}
.clock {
    width: 66px;
    margin-left: 3px;
    line-height: 17px;
    text-align: center;
    white-space: nowrap;
}
.show-desktop {
    width: 14px;
    height: 39px;
    margin-left: -3px;
    border: 1px solid #122b4d;
    background: linear-gradient(#8aa0ba, #38597f);
    box-shadow: inset 0 0 0 1px #7f97b2;
}
```
